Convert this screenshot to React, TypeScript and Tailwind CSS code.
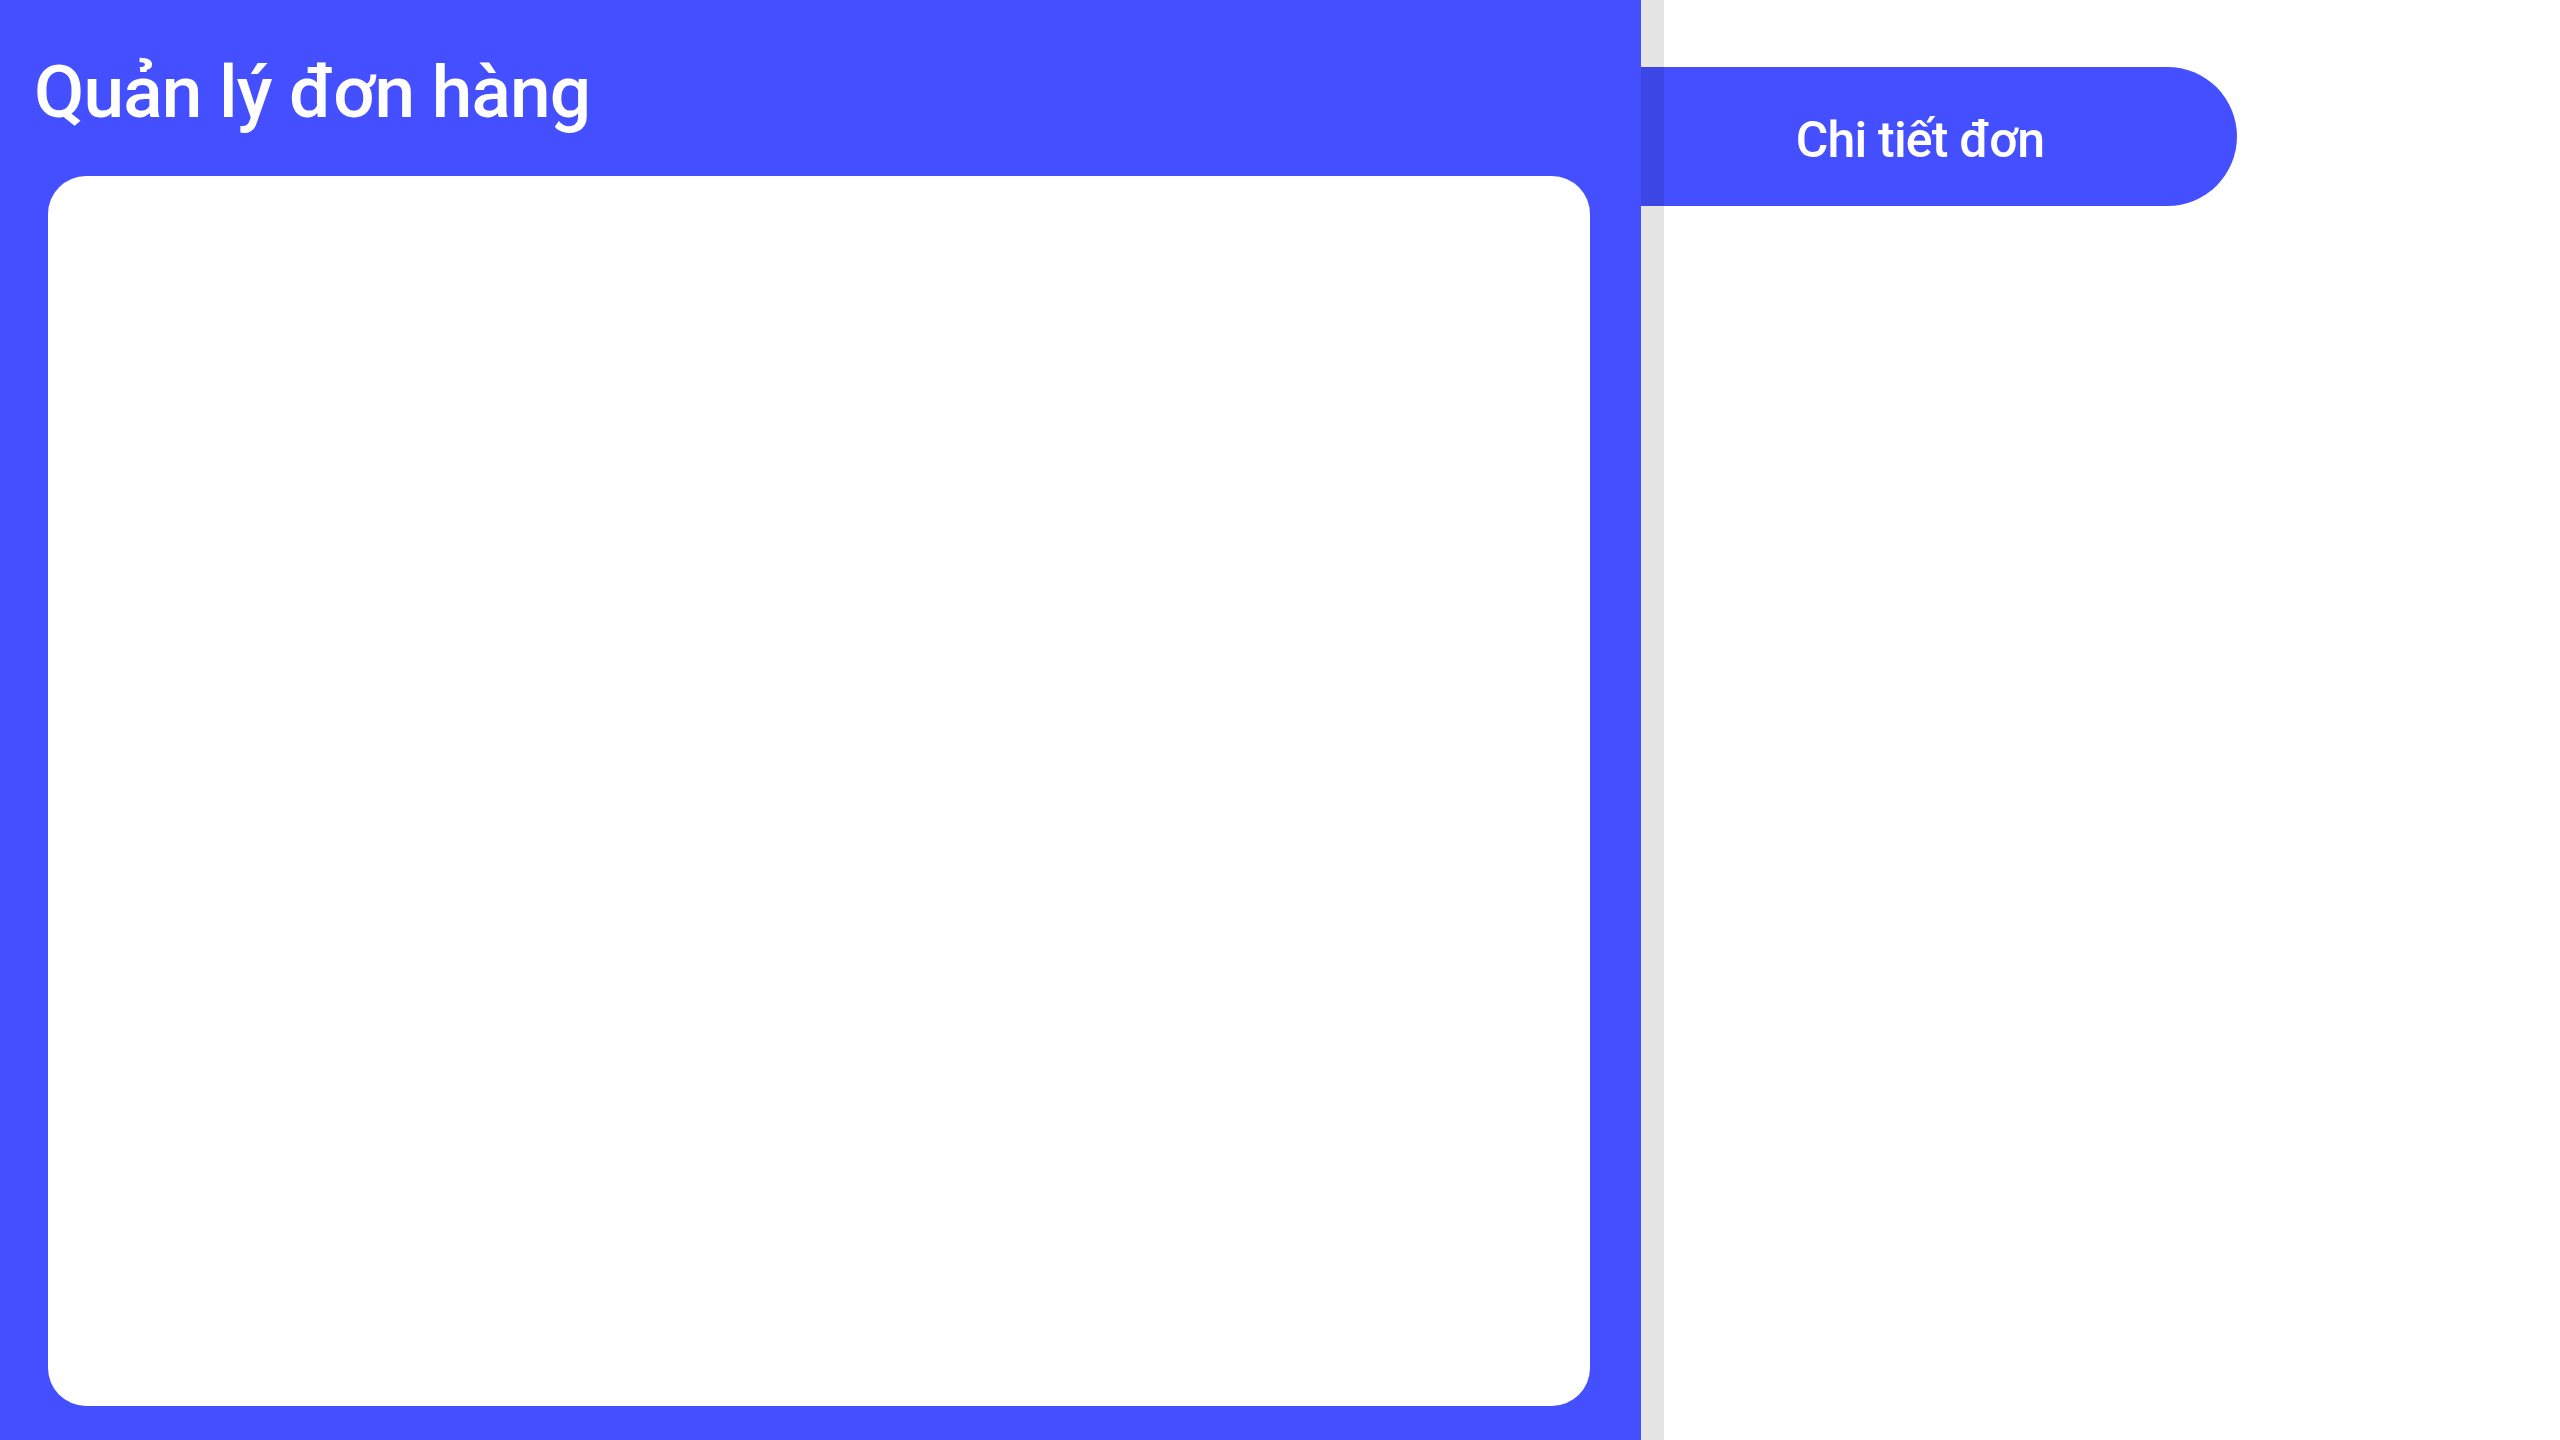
const App = () => {
  return (
    <div className="flex h-screen w-full overflow-hidden bg-white font-['Roboto',sans-serif] text-white">
      {/* order list panel */}
      <div className="flex w-[1641px] shrink-0 flex-col bg-[#4450ff]">
        <div className="h-[176px] shrink-0 pl-[34px] pt-[56px]">
          <h1 className="text-[73px] font-medium leading-none tracking-[-0.8px]">Quản lý đơn hàng</h1>
        </div>
        <div className="mb-[34px] ml-[48px] mr-[51px] flex-1 rounded-[38px] bg-white" />
      </div>

      {/* detail side */}
      <div className="relative flex-1 pt-[67px]">
        <div className="flex h-[139px] w-[596px] items-center justify-center rounded-r-full bg-[#4450ff] pr-[38px] pt-[6px]">
          <span className="text-[50px] font-medium leading-none tracking-[-0.8px]">Chi tiết đơn</span>
        </div>
        <div className="absolute left-0 top-0 h-full w-[23px] bg-black/10" />
      </div>
    </div>
  );
};

export default App;
